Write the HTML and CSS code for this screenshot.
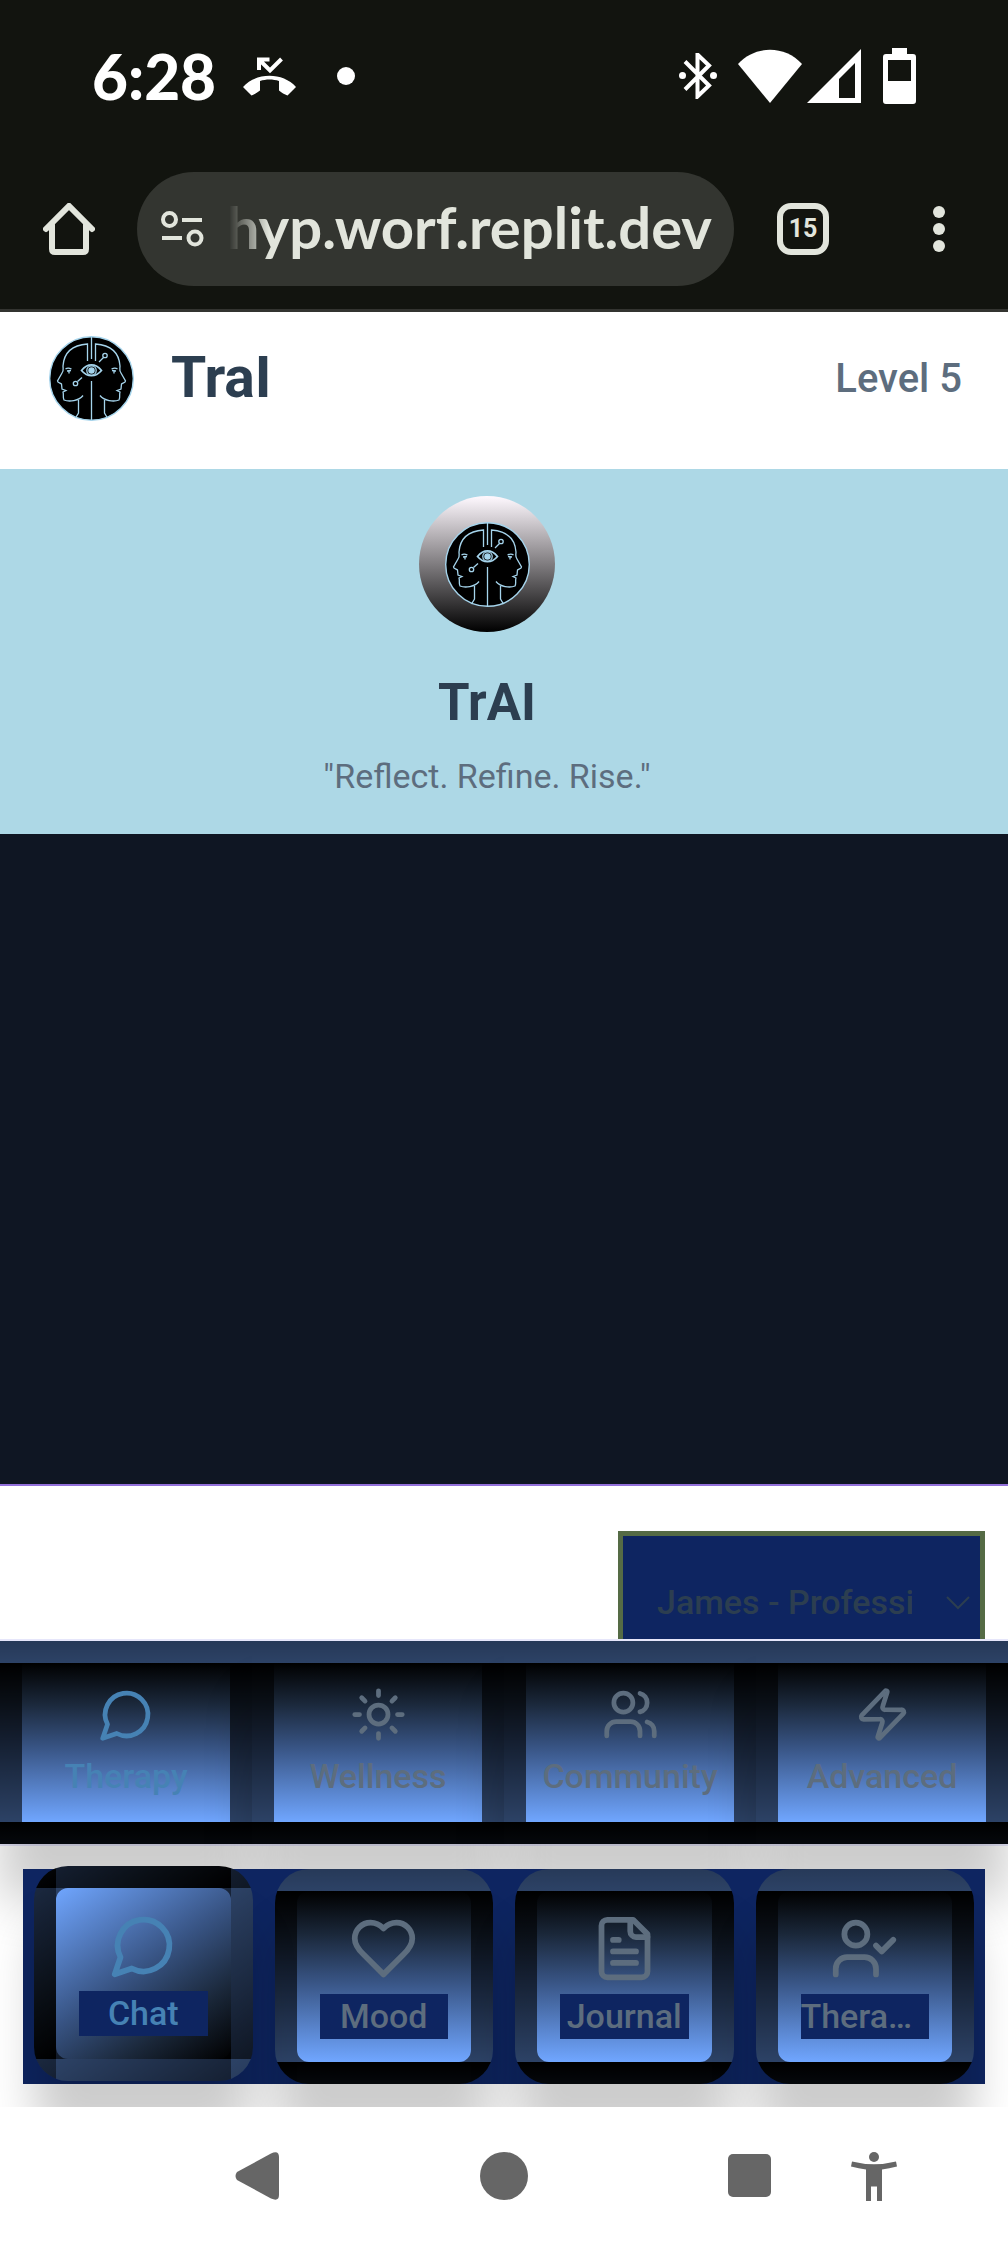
FILE: index.html
```html
<!DOCTYPE html>
<html lang="en">
<head>
<meta charset="utf-8">
<meta name="viewport" content="width=device-width, initial-scale=1">
<title>TraI</title>
<link rel="stylesheet" href="styles.css">
</head>
<body>
<svg class="defs" aria-hidden="true">
  <symbol id="logo" viewBox="0 0 85 85">
    <circle cx="42.5" cy="42.5" r="41.8" fill="#000" stroke="#a5d4ec" stroke-width="1.4"/>
    <g fill="none" stroke="#a5d4ec" stroke-width="1.3">
      <path d="M42.5 1v22M42.5 45v39"/>
      <g id="head">
        <path d="M38.5 25V8C25 9 15 15 14 30c0 3 1 4-1 7l-4.500 8c0 2 3 2 4 3l.500 5 4 1.500-3 1.500c1 3-.500 5 1 8 5 2 15 1 19-4.500M29.500 64v13l-3 5"/>
        <path d="M16.500 33c2-1.500 4-1 6 0M18 35l4-.500M20 35v2.500"/>
      </g>
      <use href="#head" transform="matrix(-1 0 0 1 85 0)"/>
      <path d="M32.500 34.500c6-7.500 14-7.500 20 0-6 7-14 7-20 0z" stroke-width="1.700"/>
      <circle cx="42.500" cy="34.500" r="4.700"/>
      <circle cx="42.500" cy="34.500" r="2.600" fill="#a5d4ec"/>
      <circle cx="26.500" cy="47.500" r="2.200"/>
      <path d="M28.500 45.500l4.500-4"/>
      <circle cx="56" cy="19.500" r="2.200"/>
      <path d="M54.500 21.500l-4.500 4.500"/>
    </g>
  </symbol>
  <symbol id="bubble" viewBox="0 0 24 24"><path d="M7.900 20A9 9 0 1 0 4 16.100L2 22Z"/></symbol>
</svg>

<header class="device">
  <div class="status">
    <div class="status-side">
      <span class="clock">6:28</span>
      <svg class="missed" viewBox="0 0 53 39" fill="#fff"><path d="M0 30C13 15 40 15 53 30l-8.500 8.500c-3-1-6-3-8.500-5v-9.500c-6-2-13-2-19 0v9.500c-2.500 2-5.500 4-8.500 5z"/><path d="M16 13V2.500h10.500M16.500 3L27 13.500 38.500 2" fill="none" stroke="#fff" stroke-width="4"/></svg>
      <span class="dot"></span>
    </div>
    <div class="status-side">
      <svg class="bt" viewBox="0 0 38 46"><path d="M6 9l24 24-11.500 11V2L30 13 6 37" transform="translate(0 -.500)" fill="none" stroke="#fff" stroke-width="4"/><circle cx="3.500" cy="22.500" r="3.500" fill="#fff"/><circle cx="34.500" cy="22.500" r="3.500" fill="#fff"/></svg>
      <svg class="wifi" viewBox="0 0 64 54" fill="#fff"><path d="M0 15C17-4 47-4 64 15L32 54z"/></svg>
      <svg class="cell" viewBox="0 0 54 54" fill="#fff" fill-rule="evenodd"><path d="M54 0v54H0zM32 30v19h16V14z"/></svg>
      <svg class="battery" viewBox="0 0 33 56" fill="#fff" fill-rule="evenodd"><path d="M9 0h15v6h6a3 3 0 0 1 3 3v44a3 3 0 0 1-3 3H3a3 3 0 0 1-3-3V9a3 3 0 0 1 3-3h6zM5 12v21h23V12z"/></svg>
    </div>
  </div>
  <div class="toolbar">
    <button class="plain" aria-label="Home"><svg class="tool" viewBox="0 0 52 52" fill="none" stroke="#e2e5dc" stroke-width="6" stroke-linecap="round" stroke-linejoin="round"><path d="M3 26L26 3l23 23" stroke-linejoin="miter"/><path d="M9 22v24q0 3 3 3h28q3 0 3-3V22"/></svg></button>
    <div class="address">
      <svg class="tune" viewBox="0 0 43 36" fill="none" stroke="#e2e5dc" stroke-width="4"><circle cx="8.500" cy="8.500" r="6.500"/><path d="M21 9h20M1 27h20"/><circle cx="34" cy="27" r="6.500"/></svg>
      <div class="url"><span>hyp.worf.replit.dev</span></div>
    </div>
    <button class="tabs" aria-label="Tabs">15</button>
    <button class="plain menu" aria-label="Menu"><svg class="dots" viewBox="0 0 12 46" fill="#e2e5dc"><circle cx="6" cy="6" r="6"/><circle cx="6" cy="23" r="6"/><circle cx="6" cy="40" r="6"/></svg></button>
  </div>
</header>

<div class="brand">
  <svg class="logo"><use href="#logo"/></svg>
  <h1>TraI</h1>
  <span class="level">Level 5</span>
</div>

<section class="hero">
  <div class="avatar"><svg class="logo"><use href="#logo"/></svg></div>
  <h2>TrAI</h2>
  <p>"Reflect. Refine. Rise."</p>
</section>

<main class="messages"></main>

<div class="composer">
  <div class="picker">
    <select aria-label="Therapist"><option>James - Professional</option></select>
    <svg class="chevron" viewBox="0 0 24 14" fill="none" stroke="#2c3e50" stroke-width="2"><path d="M1 1l11 11L23 1"/></svg>
  </div>
</div>

<nav class="primary">
  <button class="item active"><svg class="icon"><use href="#bubble"/></svg>Therapy</button>
  <button class="item"><svg class="icon" viewBox="0 0 24 24"><circle cx="12" cy="12" r="4"/><path d="M12 2v2M12 20v2M4.930 4.930l1.410 1.410M17.660 17.660l1.410 1.410M2 12h2M20 12h2M6.340 17.660l-1.410 1.410M19.070 4.930l-1.410 1.410"/></svg>Wellness</button>
  <button class="item"><svg class="icon" viewBox="0 0 24 24"><path d="M16 21v-2a4 4 0 0 0-4-4H6a4 4 0 0 0-4 4v2"/><circle cx="9" cy="7" r="4"/><path d="M22 21v-2a4 4 0 0 0-3-3.870M16 3.130a4 4 0 0 1 0 7.750"/></svg>Community</button>
  <button class="item"><svg class="icon" viewBox="0 0 24 24"><path d="M4 14a1 1 0 0 1-.780-1.630l9.900-10.200a.5.5 0 0 1 .860.460l-1.920 6.020A1 1 0 0 0 13 10h7a1 1 0 0 1 .780 1.630l-9.900 10.200a.5.5 0 0 1-.860-.460l1.920-6.020A1 1 0 0 0 11 14z"/></svg>Advanced</button>
</nav>

<nav class="secondary">
  <div class="strip">
    <button class="tile active"><svg class="icon"><use href="#bubble"/></svg><span>Chat</span></button>
    <button class="tile"><svg class="icon" viewBox="0 0 24 24"><path d="M19 14c1.490-1.460 3-3.210 3-5.500A5.500 5.500 0 0 0 16.500 3c-1.760 0-3 .5-4.500 2-1.500-1.500-2.740-2-4.500-2A5.500 5.500 0 0 0 2 8.500c0 2.300 1.500 4.050 3 5.500l7 7Z"/></svg><span>Mood</span></button>
    <button class="tile"><svg class="icon" viewBox="0 0 24 24"><path d="M15 2H6a2 2 0 0 0-2 2v16a2 2 0 0 0 2 2h12a2 2 0 0 0 2-2V7Z"/><path d="M14 2v4a2 2 0 0 0 2 2h4M10 9H8M16 13H8M16 17H8"/></svg><span>Journal</span></button>
    <button class="tile"><svg class="icon" viewBox="0 0 24 24"><path d="M16 21v-2a4 4 0 0 0-4-4H6a4 4 0 0 0-4 4v2"/><circle cx="9" cy="7" r="4"/><path d="M16 11l2 2 4-4"/></svg><span>Therapists</span></button>
  </div>
</nav>

<footer class="system">
  <button class="plain" aria-label="Back"><svg class="sys" viewBox="0 0 48 48"><path d="M3 20Q0 24 3 28L37 46.500Q45 50 45 43V5Q45-2 37 1.500z"/></svg></button>
  <button class="plain" aria-label="Home screen"><svg class="sys" viewBox="0 0 48 48"><circle cx="24" cy="24" r="24"/></svg></button>
  <div class="sys-end">
    <button class="plain" aria-label="Recent apps"><svg class="sys" viewBox="0 0 48 48"><rect x="2" y="2" width="43" height="43" rx="5"/></svg></button>
    <button class="plain" aria-label="Accessibility"><svg class="sys" viewBox="0 0 48 48"><circle cx="24" cy="5" r="5"/><path d="M2 9.500Q24 15 46 9.500L47 14.500Q39 16.500 32 17.500V49H27V34.500H21V49H16V17.500Q9 16.500 1 14.500z"/></svg></button>
  </div>
</footer>
</body>
</html>
```
FILE: styles.css
```css
* { box-sizing: border-box; }

body {
  margin: 0;
  min-height: 100vh;
  display: flex;
  flex-direction: column;
  background: #fff;
  color: #2c3e50;
  font-family: Roboto, "Liberation Sans", sans-serif;
  font-size: 34px;
}

button { font: inherit; padding: 0; border: 0; }
svg { display: block; flex: none; }
.defs { position: absolute; width: 0; height: 0; }
.plain { background: none; }

/* Device status bar and browser toolbar */
.device {
  background: #12140f;
  color: #e2e5dc;
  border-bottom: 3px solid #333430;
}
.status {
  display: flex;
  justify-content: space-between;
  align-items: center;
  height: 152px;
  padding: 0 92px;
  color: #fff;
}
.status-side { display: flex; align-items: center; }
.clock {
  font-family: Lato, Roboto, sans-serif;
  font-weight: 900;
  font-size: 62px;
  line-height: 64px;
}
.missed { width: 53px; height: 39px; margin-left: 27px; }
.dot { width: 18px; height: 18px; border-radius: 50%; background: #fff; margin-left: 41px; }
.bt { width: 38px; height: 46px; margin-right: 21px; }
.wifi { width: 64px; height: 54px; margin-right: 5px; }
.cell { width: 54px; height: 54px; margin-right: 22px; }
.battery { width: 33px; height: 56px; }

.toolbar {
  display: flex;
  align-items: center;
  height: 157px;
  padding: 0 63px 3px 43px;
}
.tool { width: 52px; height: 52px; }
.address {
  flex: 1;
  min-width: 0;
  display: flex;
  align-items: center;
  height: 114px;
  margin: 0 43px 0 42px;
  padding: 0 22px 0 24px;
  border-radius: 57px;
  background: #333530;
}
.tune { width: 43px; height: 36px; }
.url {
  flex: 1;
  min-width: 0;
  display: flex;
  justify-content: flex-end;
  margin-left: 25px;
  overflow: hidden;
  white-space: nowrap;
  font-family: Lato, Roboto, sans-serif;
  font-weight: 700;
  font-size: 58px;
  line-height: 80px;
  padding-bottom: 4px;
  mask-image: linear-gradient(to right, transparent, #000 40px);
}
.tabs {
  width: 52px;
  height: 52px;
  border: 6px solid #e2e5dc;
  border-radius: 14px;
  background: none;
  color: #e2e5dc;
  font-family: Roboto, sans-serif;
  font-weight: 700;
  font-size: 25px;
  line-height: 40px;
}
.menu { margin-left: 104px; }
.dots { width: 12px; height: 46px; }

/* App header */
.brand {
  display: flex;
  align-items: center;
  height: 157px;
  padding: 0 46px 25px 49px;
}
.logo { width: 85px; height: 85px; }
h1 { margin: 0 auto 0 37px; font-size: 57px; line-height: 64px; font-weight: 700; }
.level { font-size: 40px; font-weight: 500; color: #5d6d7e; }

.hero {
  display: flex;
  flex-direction: column;
  align-items: center;
  height: 365px;
  padding: 27px 34px 0 0;
  background: #add8e6;
}
.avatar {
  display: grid;
  place-items: center;
  width: 136px;
  height: 136px;
  border-radius: 50%;
  background: linear-gradient(#fff9ff, #000);
}
h2 { margin: 39px 0 0; font-size: 51px; line-height: 64px; font-weight: 700; }
.hero p { margin: 19px 0 0; font-size: 34px; line-height: 44px; color: #5d6d7e; }

.messages { flex: 1; background: #0f1623; }

/* Therapist picker, cut off by the navigation below it */
.composer {
  display: flex;
  justify-content: flex-end;
  align-items: flex-start;
  height: 155px;
  padding: 45px 23px 0;
  border-top: 2px solid #9370db;
  overflow: hidden;
}
.picker { position: relative; }
select {
  appearance: none;
  display: block;
  width: 367px;
  height: 142px;
  margin: 0;
  padding: 0 68px 0 34px;
  border: 5px solid #556b45;
  border-radius: 0;
  background: #0e2561;
  color: #2c3e50;
  font: 500 34px/44px Roboto, sans-serif;
}
.chevron { position: absolute; right: 15px; top: 65px; width: 24px; height: 14px; }

/* Navigation rows share a translucent frame over a repeating gradient */
.primary {
  display: grid;
  grid-template-columns: repeat(4, 1fr);
  border-top: 2px solid #e6e6fa;
  border-bottom: 2px solid #e6e6fa;
}
.item, .tile {
  display: flex;
  flex-direction: column;
  align-items: center;
  min-width: 0;
  gap: 11px;
  padding: 23px;
  border: 22px solid rgba(0, 0, 0, 0.6);
  background: linear-gradient(#000, #1a2739 25%, #385484 53%, #70a6ff);
  box-shadow: 0 57px 46px rgba(0, 0, 0, 0.2);
  color: #5d6d7e;
  font-weight: 500;
  line-height: 45px;
}
.item { padding: 23px 0; }
.icon {
  width: 57px;
  height: 57px;
  fill: none;
  stroke: currentColor;
  stroke-width: 2;
  stroke-linecap: round;
  stroke-linejoin: round;
}
.item.active, .tile.active { color: #4682b4; }

.secondary { padding: 23px; }
.strip {
  display: grid;
  grid-template-columns: repeat(4, 1fr);
  background: #0e2561;
}
.tile { margin: 0 11px; border-radius: 34px; }
.tile .icon { width: 69px; height: 69px; }
.tile span {
  width: 100%;
  overflow: hidden;
  text-overflow: ellipsis;
  background: #0e2561;
}
.tile.active {
  background: linear-gradient(145deg, #70a6ff, #385484 47%, #1a2739 75%, #000);
  transform: translateY(-3px);
}

/* System navigation */
.system {
  position: relative;
  display: flex;
  justify-content: space-between;
  align-items: center;
  height: 137px;
  padding: 0 110px 0 234px;
  background: #fff;
}
.sys-end { display: flex; gap: 76px; }
.sys { width: 48px; height: 48px; fill: #666; overflow: visible; }
```
